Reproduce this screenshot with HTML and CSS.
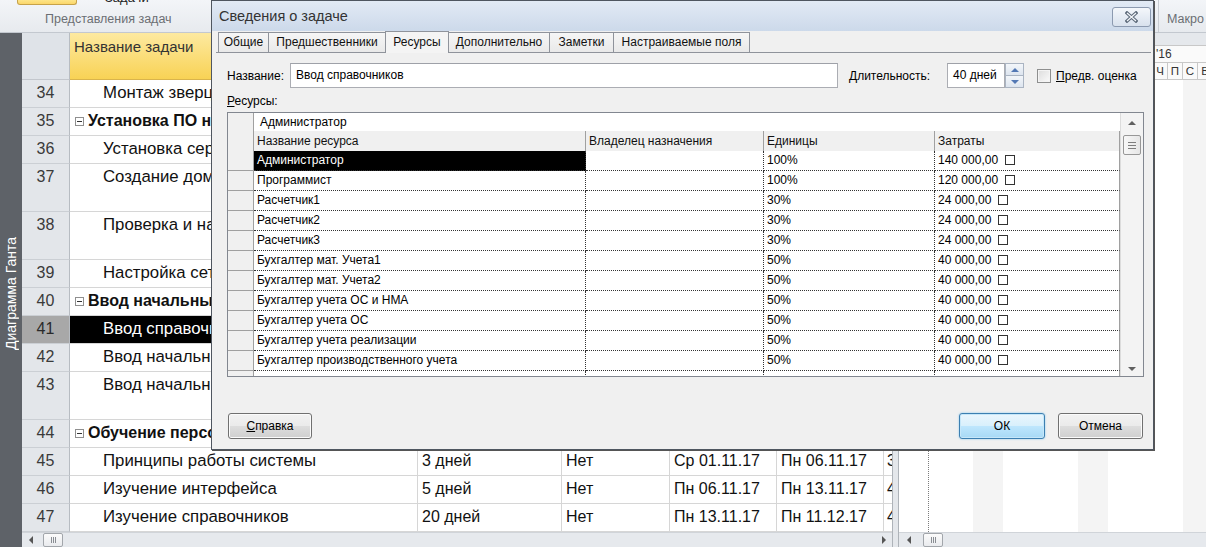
FILE: index.html
```html
<!DOCTYPE html>
<html lang="ru">
<head>
<meta charset="utf-8">
<title>Сведения о задаче</title>
<link rel="stylesheet" href="styles.css">
</head>
<body>
<div class="app">
  <header class="ribbon">
    <div class="rgroup views">
      <div class="rtop">
        <span class="gantt-btn"></span>
        <span class="rtab-text">Задачи</span>
      </div>
      <div class="rlabel">Представления задач</div>
    </div>
    <div class="rspacer"></div>
    <div class="rgroup macro">
      <div class="rtop"></div>
      <div class="rlabel">Макро</div>
    </div>
  </header>

  <div class="main">
    <aside class="viewbar"><span>Диаграмма Ганта</span></aside>

    <section class="sheet">
      <div class="grid">
        <div class="grow ghead">
          <div class="c num"></div>
          <div class="c name hsel">Название задачи</div>
          <div class="c"></div><div class="c"></div><div class="c"></div><div class="c"></div><div class="c"></div>
        </div>
        <div class="grow">
          <div class="c num">34</div><div class="c name task">Монтаж зверцо</div>
          <div class="c"></div><div class="c"></div><div class="c"></div><div class="c"></div><div class="c"></div>
        </div>
        <div class="grow">
          <div class="c num">35</div><div class="c name sum"><span class="tog"></span>Установка ПО на</div>
          <div class="c"></div><div class="c"></div><div class="c"></div><div class="c"></div><div class="c"></div>
        </div>
        <div class="grow">
          <div class="c num">36</div><div class="c name task">Установка серв</div>
          <div class="c"></div><div class="c"></div><div class="c"></div><div class="c"></div><div class="c"></div>
        </div>
        <div class="grow tall">
          <div class="c num">37</div><div class="c name task">Создание домен</div>
          <div class="c"></div><div class="c"></div><div class="c"></div><div class="c"></div><div class="c"></div>
        </div>
        <div class="grow tall">
          <div class="c num">38</div><div class="c name task">Проверка и нас</div>
          <div class="c"></div><div class="c"></div><div class="c"></div><div class="c"></div><div class="c"></div>
        </div>
        <div class="grow">
          <div class="c num">39</div><div class="c name task">Настройка сети</div>
          <div class="c"></div><div class="c"></div><div class="c"></div><div class="c"></div><div class="c"></div>
        </div>
        <div class="grow">
          <div class="c num">40</div><div class="c name sum"><span class="tog"></span>Ввод начальных</div>
          <div class="c"></div><div class="c"></div><div class="c"></div><div class="c"></div><div class="c"></div>
        </div>
        <div class="grow selrow">
          <div class="c num">41</div><div class="c name task">Ввод справочни</div>
          <div class="c"></div><div class="c"></div><div class="c"></div><div class="c"></div><div class="c"></div>
        </div>
        <div class="grow">
          <div class="c num">42</div><div class="c name task">Ввод начальны</div>
          <div class="c"></div><div class="c"></div><div class="c"></div><div class="c"></div><div class="c"></div>
        </div>
        <div class="grow tall">
          <div class="c num">43</div><div class="c name task">Ввод начальны</div>
          <div class="c"></div><div class="c"></div><div class="c"></div><div class="c"></div><div class="c"></div>
        </div>
        <div class="grow">
          <div class="c num">44</div><div class="c name sum"><span class="tog"></span>Обучение персо</div>
          <div class="c"></div><div class="c"></div><div class="c"></div><div class="c"></div><div class="c"></div>
        </div>
        <div class="grow">
          <div class="c num">45</div><div class="c name task">Принципы работы системы</div>
          <div class="c">3 дней</div><div class="c">Нет</div><div class="c">Ср 01.11.17</div><div class="c">Пн 06.11.17</div><div class="c last">3</div>
        </div>
        <div class="grow">
          <div class="c num">46</div><div class="c name task">Изучение интерфейса</div>
          <div class="c">5 дней</div><div class="c">Нет</div><div class="c">Пн 06.11.17</div><div class="c">Пн 13.11.17</div><div class="c last">4</div>
        </div>
        <div class="grow">
          <div class="c num">47</div><div class="c name task">Изучение справочников</div>
          <div class="c">20 дней</div><div class="c">Нет</div><div class="c">Пн 13.11.17</div><div class="c">Пн 11.12.17</div><div class="c last">4</div>
        </div>
      </div>
      <div class="hscroll sheet-scroll">
        <span class="arr left"></span>
        <span class="hthumb"><i></i><i></i><i></i></span>
        <span class="hspace"></span>
        <span class="arr right"></span>
      </div>
    </section>

    <div class="splitter"></div>

    <section class="gantt">
      <div class="ts">
        <div class="tier1"></div>
        <div class="tier2">
          <span class="wk w0"></span><span class="wk wl">'16</span>
        </div>
        <div class="tier3">
          <span class="d d0"></span><span class="d"></span><span class="d"></span><span class="d"></span><span class="d"></span><span class="d"></span><span class="d"></span>
          <span class="d"></span><span class="d"></span><span class="d"></span><span class="d"></span><span class="d"></span><span class="d"></span><span class="d"></span>
          <span class="d"></span><span class="d"></span><span class="d"></span><span class="d">Ч</span><span class="d">П</span><span class="d">С</span><span class="d">В</span>
        </div>
      </div>
      <div class="gbody"><span class="today"></span></div>
      <div class="hscroll gantt-scroll">
        <span class="arr left"></span>
        <span class="hthumb"><i></i><i></i><i></i></span>
      </div>
    </section>
  </div>
</div>

<div class="dialog">
  <div class="dlg-title">
    <span class="dlg-caption">Сведения о задаче</span>
    <span class="close-btn">
      <svg width="13" height="12" viewBox="0 0 13 12">
        <path d="M2 2 L11 10 M11 2 L2 10" stroke="#5d6a7a" stroke-width="3.4" stroke-linecap="square" fill="none"/>
        <path d="M2 2 L11 10 M11 2 L2 10" stroke="#f3f6fa" stroke-width="1.3" stroke-linecap="butt" fill="none"/>
      </svg>
    </span>
  </div>

  <div class="tabs">
    <span class="tab t1">Общие</span>
    <span class="tab t2">Предшественники</span>
    <span class="tab t3 active">Ресурсы</span>
    <span class="tab t4">Дополнительно</span>
    <span class="tab t5">Заметки</span>
    <span class="tab t6">Настраиваемые поля</span>
  </div>

  <div class="panel">
    <div class="namerow">
      <span class="lbl name-lbl">Название:</span>
      <span class="input name-input">Ввод справочников</span>
      <span class="lbl dur-lbl"><u>Д</u>лительность:</span>
      <span class="input dur-input">40 дней</span>
      <span class="spin"><span class="sp up"><i></i></span><span class="sp down"><i></i></span></span>
      <span class="chk"></span>
      <span class="lbl est-lbl"><u>П</u>редв. оценка</span>
    </div>

    <div class="res-lbl"><u>Р</u>есурсы:</div>

    <div class="rtable">
      <div class="rt-body">
        <div class="rt-entry"><span class="esel"></span><span class="entry-text">Администратор</span></div>
        <div class="rt-row rt-head">
          <span class="sel"></span><span class="h">Название ресурса</span><span class="h">Владелец назначения</span><span class="h">Единицы</span><span class="h hl">Затраты</span>
        </div>
        <div class="rt-row"><span class="sel"></span><span class="d cur">Администратор</span><span class="d"></span><span class="d">100%</span><span class="d dl">140 000,00<b class="box"></b></span></div>
        <div class="rt-row"><span class="sel"></span><span class="d">Программист</span><span class="d"></span><span class="d">100%</span><span class="d dl">120 000,00<b class="box"></b></span></div>
        <div class="rt-row"><span class="sel"></span><span class="d">Расчетчик1</span><span class="d"></span><span class="d">30%</span><span class="d dl">24 000,00<b class="box"></b></span></div>
        <div class="rt-row"><span class="sel"></span><span class="d">Расчетчик2</span><span class="d"></span><span class="d">30%</span><span class="d dl">24 000,00<b class="box"></b></span></div>
        <div class="rt-row"><span class="sel"></span><span class="d">Расчетчик3</span><span class="d"></span><span class="d">30%</span><span class="d dl">24 000,00<b class="box"></b></span></div>
        <div class="rt-row"><span class="sel"></span><span class="d">Бухгалтер мат. Учета1</span><span class="d"></span><span class="d">50%</span><span class="d dl">40 000,00<b class="box"></b></span></div>
        <div class="rt-row"><span class="sel"></span><span class="d">Бухгалтер мат. Учета2</span><span class="d"></span><span class="d">50%</span><span class="d dl">40 000,00<b class="box"></b></span></div>
        <div class="rt-row"><span class="sel"></span><span class="d">Бухгалтер учета ОС и НМА</span><span class="d"></span><span class="d">50%</span><span class="d dl">40 000,00<b class="box"></b></span></div>
        <div class="rt-row"><span class="sel"></span><span class="d">Бухгалтер учета ОС</span><span class="d"></span><span class="d">50%</span><span class="d dl">40 000,00<b class="box"></b></span></div>
        <div class="rt-row"><span class="sel"></span><span class="d">Бухгалтер учета реализации</span><span class="d"></span><span class="d">50%</span><span class="d dl">40 000,00<b class="box"></b></span></div>
        <div class="rt-row"><span class="sel"></span><span class="d">Бухгалтер производственного учета</span><span class="d"></span><span class="d">50%</span><span class="d dl">40 000,00<b class="box"></b></span></div>
        <div class="rt-row"><span class="sel"></span><span class="d"></span><span class="d"></span><span class="d"></span><span class="d dl"></span></div>
      </div>
      <div class="vscroll">
        <span class="varr up"></span>
        <span class="vthumb"><i></i><i></i><i></i></span>
        <span class="vspace"></span>
        <span class="varr down"></span>
      </div>
    </div>
  </div>

  <div class="buttons">
    <span class="btn help"><u>С</u>правка</span>
    <span class="bspace"></span>
    <span class="btn ok">ОК</span>
    <span class="btn cancel">Отмена</span>
  </div>
</div>
</body>
</html>
```

FILE: styles.css
```css
* { box-sizing: border-box; }
html, body { margin: 0; padding: 0; }
body {
  width: 1206px;
  height: 547px;
  overflow: hidden;
  position: relative;
  background: #ffffff;
  font-family: "Liberation Sans", Arial, sans-serif;
  color: #000;
}

.app { display: flex; flex-direction: column; height: 547px; }

/* ---------- ribbon ---------- */
.ribbon {
  height: 33px;
  flex: none;
  display: flex;
  background: linear-gradient(#f3f5f8, #e7eaee);
  border-bottom: 1px solid #c3c8cf;
}
.rgroup { display: flex; flex-direction: column; }
.views { width: 220px; }
.rtop { height: 7px; overflow: hidden; display: flex; align-items: flex-start; }
.gantt-btn {
  margin-left: 17px;
  width: 60px;
  height: 5px;
  border: 1px solid #c6a24a;
  border-top: none;
  border-radius: 0 0 3px 3px;
  background: linear-gradient(#fde488, #fbd66a);
}
.rtab-text {
  margin-left: 28px;
  margin-top: -9px;
  font-size: 13px;
  line-height: 14px;
  color: #222;
}
.rlabel {
  margin-top: 5px;
  font-size: 12.5px;
  line-height: 14px;
  color: #6b6e73;
  white-space: nowrap;
}
.views .rlabel { padding-left: 45px; }
.rspacer { flex: 1; }
.macro {
  width: 48px;
  border-left: 1px solid #c9cdd3;
  padding-left: 8px;
}

/* ---------- main area ---------- */
.main { flex: 1; display: flex; min-height: 0; }
.viewbar {
  width: 22px;
  flex: none;
  background: #5e6268;
  display: flex;
  align-items: center;
  justify-content: center;
}
.viewbar span {
  writing-mode: vertical-rl;
  transform: rotate(180deg);
  color: #ffffff;
  font-size: 14px;
  white-space: nowrap;
  margin-top: 8px;
}

.sheet { width: 870px; flex: none; display: flex; flex-direction: column; }
.grid { flex: 1; overflow: hidden; }
.grow {
  display: grid;
  grid-template-columns: 48px 348px 144px 108px 107px 107px 8px;
  height: 28px;
}
.grow.tall { height: 48px; }
.grow.ghead { height: 47px; }
.c {
  border-right: 1px solid #d6d6d6;
  border-bottom: 1px solid #d6d6d6;
  padding: 3px 0 0 4px;
  font-size: 16px;
  line-height: 20px;
  white-space: nowrap;
  overflow: hidden;
  color: #111;
}
.c.name { font-size: 16.8px; }
.c.num {
  background: #e3e6ea;
  text-align: center;
  padding-left: 0;
  color: #3a3a3a;
  border-right-color: #b7bcc2;
  border-bottom-color: #cbcfd4;
}
.c.last { padding-left: 3px; border-right: none; }
.ghead .c { background: #e6e9ed; border-bottom-color: #c3c7cd; }
.ghead .c.hsel {
  background: linear-gradient(#fde9a0, #f8d255);
  font-size: 15px;
  padding: 4px 0 0 4px;
  color: #333;
  border-right-color: #d9b44c;
  border-bottom-color: #d9b44c;
}
.ghead .c.num { background: #dfe3e8; }
.c.task { padding-left: 33px; }
.c.sum { padding-left: 5px; font-weight: bold; display: flex; align-items: flex-start; font-size: 16px; }
.tog {
  width: 9px;
  height: 9px;
  margin: 6px 4px 0 0;
  border: 1px solid #8f8f8f;
  background: #fff;
  position: relative;
  flex: none;
}
.tog::after {
  content: "";
  position: absolute;
  left: 1px;
  top: 3px;
  width: 5px;
  height: 1px;
  background: #333;
}
.selrow .c.name { background: #000; color: #fff; }
.selrow .c.num { background: #a8a8a8; color: #2a2a2a; }

.hscroll {
  height: 15px;
  flex: none;
  background: #e6e9ed;
  border-top: 1px solid #d0d4d9;
  display: flex;
  align-items: center;
}
.arr { width: 0; height: 0; border-top: 4px solid transparent; border-bottom: 4px solid transparent; }
.arr.left { border-right: 4px solid #555; }
.arr.right { border-left: 4px solid #555; }
.sheet-scroll { padding-left: 7px; padding-right: 6px; }
.sheet-scroll .hthumb { margin-left: 10px; }
.hthumb {
  width: 20px;
  height: 14px;
  border: 1px solid #a2a6ab;
  border-radius: 2px;
  background: linear-gradient(#fbfbfb, #e9ebee);
  display: flex;
  align-items: center;
  justify-content: center;
  gap: 1px;
}
.hthumb i { width: 1px; height: 6px; background: #8a8e94; }
.hspace { flex: 1; }
.gantt-scroll { padding-left: 8px; }
.gantt-scroll .hthumb { margin-left: 12px; }

.splitter {
  width: 7px;
  flex: none;
  background: #e4e7eb;
  border-left: 1px solid #aeb3b9;
  border-right: 1px solid #aeb3b9;
}

/* ---------- gantt ---------- */
.gantt { flex: 1; display: flex; flex-direction: column; min-width: 0; overflow: hidden; }
.ts { height: 47px; flex: none; display: flex; flex-direction: column; border-bottom: 1px solid #c8c8c8; }
.tier1 { height: 13px; background: #e5e8ec; border-bottom: 1px solid #c8c8c8; }
.tier2 { height: 17px; display: flex; border-bottom: 1px solid #c8c8c8; background: #fafafa; }
.wk {
  flex: none;
  border-right: 1px solid #c8c8c8;
  font-size: 12px;
  line-height: 16px;
  color: #333;
  white-space: nowrap;
}
.wk.w0 { width: 254px; }
.wk.wl { width: 60px; padding-left: 3px; border-right: none; }
.tier3 { height: 17px; display: flex; background: #fafafa; }
.d {
  width: 15px;
  flex: none;
  border-right: 1px solid #c8c8c8;
  font-size: 11.5px;
  line-height: 16px;
  text-align: center;
  color: #333;
}
.d.d0 { width: 14px; }
.gbody {
  flex: 1;
  position: relative;
  background: repeating-linear-gradient(90deg, #ffffff 0 74px, #f4f4f4 74px 104px, #ffffff 104px 105px);
}
.today {
  position: absolute;
  left: 29px;
  top: 0;
  bottom: 0;
  border-left: 1px dotted #7c7c7c;
}

/* ---------- dialog ---------- */
.dialog {
  position: absolute;
  left: 211px;
  top: 0;
  width: 943px;
  height: 450px;
  border: 1px solid #4f5660;
  box-shadow: 1px 1px 0 #555;
  background: #f0f0f0;
  display: flex;
  flex-direction: column;
  font-size: 12px;
  color: #000;
}
.dlg-title {
  height: 30px;
  flex: none;
  background: linear-gradient(#e2eaf5, #ccd9ea);
  display: flex;
  align-items: center;
  justify-content: space-between;
  padding: 0 2px 0 7px;
}
.dlg-caption { font-size: 14.5px; color: #333; }
.close-btn {
  width: 39px;
  height: 20px;
  margin-top: 1px;
  border: 1px solid #8c9ab0;
  border-radius: 3px;
  background: linear-gradient(#f4f7fb, #d8e1ed);
  display: flex;
  align-items: center;
  justify-content: center;
}

.tabs {
  height: 22px;
  flex: none;
  margin: 0 2px 0 4px;
  padding-left: 2px;
  display: flex;
  align-items: flex-end;
  border-bottom: 1px solid #8f939b;
}
.tab {
  height: 20px;
  border: 1px solid #8f939b;
  border-bottom: none;
  margin-right: -1px;
  background: linear-gradient(#f6f6f6, #e9e9e9);
  font-size: 12px;
  line-height: 18px;
  text-align: center;
  white-space: nowrap;
  color: #111;
}
.tab.active {
  height: 22px;
  margin-bottom: -1px;
  background: #f4f4f4;
  line-height: 20px;
  position: relative;
  z-index: 1;
}
.t1 { width: 51px; }
.t2 { width: 118px; }
.t3 { width: 64px; }
.t4 { width: 102px; }
.t5 { width: 65px; }
.t6 { width: 137px; }

.panel { flex: none; padding: 10px 0 0 15px; }
.namerow { display: flex; align-items: center; height: 25px; }
.lbl { white-space: nowrap; }
.name-lbl { width: 63px; }
.input {
  height: 25px;
  border: 1px solid #abadb3;
  border-top-color: #9ea1a8;
  background: #fff;
  line-height: 23px;
  padding-left: 5px;
  white-space: nowrap;
}
.name-input { width: 548px; }
.dur-lbl { margin-left: 11px; width: 98px; }
.dur-input { width: 58px; }
.spin { width: 19px; height: 25px; display: flex; flex-direction: column; }
.sp {
  flex: 1;
  border: 1px solid #aab4c2;
  background: linear-gradient(#f3f6fa, #dde5ef);
  display: flex;
  align-items: center;
  justify-content: center;
}
.sp.down { border-top: none; }
.sp i { width: 0; height: 0; border-left: 4px solid transparent; border-right: 4px solid transparent; }
.sp.up i { border-bottom: 4px solid #5378b4; }
.sp.down i { border-top: 4px solid #5378b4; }
.chk {
  margin-left: 13px;
  width: 14px;
  height: 14px;
  border: 1px solid #8e8f8f;
  background: linear-gradient(135deg, #dcdcdc, #fbfbfb);
  box-shadow: inset 0 0 0 1px #f4f4f4;
}
.est-lbl { margin-left: 5px; }

.res-lbl { margin-top: 6px; height: 14px; line-height: 14px; }

.rtable {
  margin-top: 4px;
  width: 917px;
  height: 265px;
  border: 1px solid #828790;
  background: #fff;
  display: flex;
}
.rt-body { width: 892px; flex: none; overflow: hidden; display: flex; flex-direction: column; }
.rt-entry {
  height: 18px;
  flex: none;
  display: flex;
}
.esel {
  width: 26px;
  flex: none;
  background: #f0f0f0;
  border-right: 1px solid #a0a0a0;
}
.entry-text { flex: 1; padding-left: 6px; line-height: 18px; white-space: nowrap; }
.rt-row {
  display: grid;
  grid-template-columns: 26px 332px 178px 171px 185px;
  height: 20px;
  flex: none;
}
.sel {
  background: #f0f0f0;
  border-right: 1px solid #a0a0a0;
  border-bottom: 1px solid #a0a0a0;
}
.rt-head .sel { border-bottom: none; }
.h {
  background: #f0f0f0;
  border-right: 1px solid #a0a0a0;
  padding-left: 3px;
  line-height: 20px;
  white-space: nowrap;
  color: #111;
}
.rt-row .d {
  width: auto;
  text-align: left;
  font-size: 12px;
  color: #000;
  border-right: 1px dotted #333;
  border-bottom: 1px dotted #333;
  padding-left: 3px;
  line-height: 19px;
  white-space: nowrap;
  overflow: hidden;
}
.rt-row .d.dl { border-right: 1px solid #a0a0a0; }
.rt-row .d.cur { background: #000; color: #fff; }
.box {
  display: inline-block;
  width: 10px;
  height: 10px;
  border: 1px solid #333;
  margin-left: 7px;
  vertical-align: -1px;
}

.vscroll {
  flex: 1;
  background: #f3f3f3;
  border-left: 1px solid #dcdcdc;
  display: flex;
  flex-direction: column;
  align-items: center;
  padding: 8px 0 5px;
}
.varr { width: 0; height: 0; border-left: 4px solid transparent; border-right: 4px solid transparent; }
.varr.up { border-bottom: 4px solid #606060; }
.varr.down { border-top: 4px solid #606060; }
.vthumb {
  margin-top: 10px;
  width: 18px;
  height: 20px;
  border: 1px solid #979797;
  border-radius: 2px;
  background: linear-gradient(90deg, #f7f7f7, #e6e6e6);
  display: flex;
  flex-direction: column;
  align-items: center;
  justify-content: center;
  gap: 2px;
}
.vthumb i { width: 8px; height: 1px; background: #7d7d7d; }
.vspace { flex: 1; }

.buttons {
  margin-top: 36px;
  display: flex;
  padding: 0 10px 0 16px;
  gap: 13px;
}
.bspace { flex: 1; }
.btn {
  height: 26px;
  border: 1px solid #707070;
  border-radius: 3px;
  background: linear-gradient(#f2f2f2 0%, #ebebeb 48%, #dddddd 52%, #cfcfcf 100%);
  box-shadow: inset 0 0 0 1px #fbfbfb;
  font-size: 12px;
  line-height: 24px;
  text-align: center;
  color: #000;
}
.btn.help { width: 84px; }
.btn.ok {
  width: 86px;
  border-color: #3c7fb1;
  background: linear-gradient(#eaf6fd 0%, #d9f0fc 48%, #bee6fd 52%, #a7d9f5 100%);
  box-shadow: inset 0 0 0 1px #c6e7f9, 0 0 2px #7cc4ef;
}
.btn.cancel { width: 85px; }
```
